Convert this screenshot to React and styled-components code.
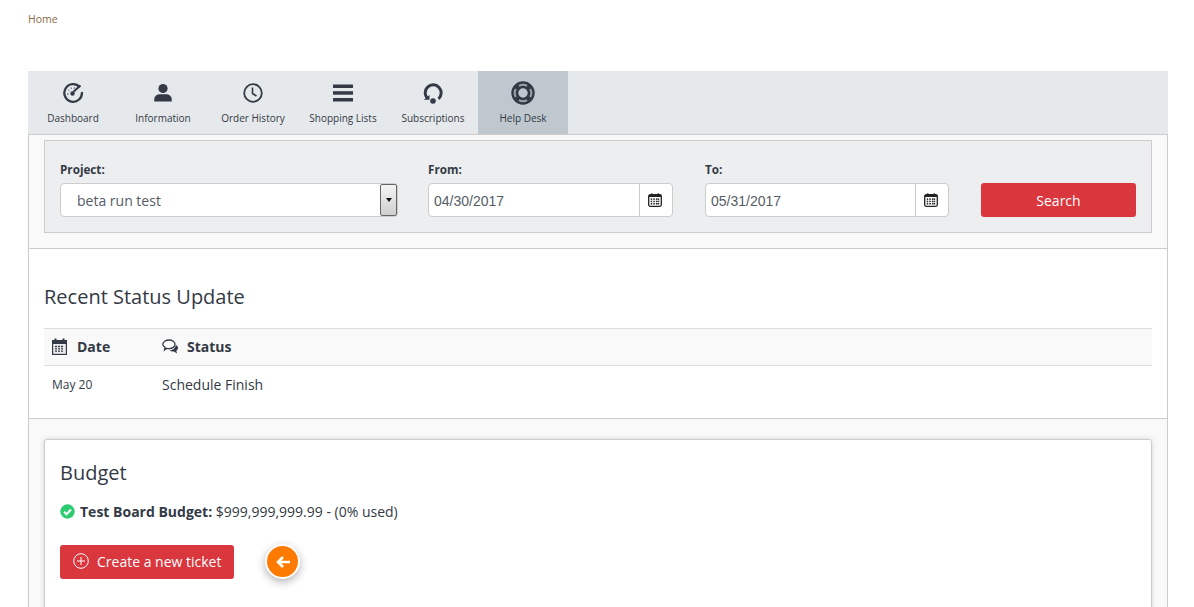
import React from "react";
import styled, { createGlobalStyle } from "styled-components";

const Global = createGlobalStyle`
  html, body { margin: 0; padding: 0; background: #fff; overflow: hidden; }
  body { font-family: "Open Sans", sans-serif; color: #333a45; height: 607px; }
  * { box-sizing: border-box; }
`;

const Page = styled.div`
  padding: 0 26px 0 28px;
  height: 607px;
  overflow: hidden;
`;
const Crumb = styled.div`
  height: 71px;
  padding-top: 12px;
  font-size: 10.5px;
  line-height: 14px;
  color: #8a6a4a;
`;
const Tabs = styled.nav`
  display: flex;
  height: 64px;
  background: #e6e9ec;
  border-bottom: 1px solid #ccc;
`;
const Tab = styled.div`
  width: 90px;
  height: 63px;
  display: flex;
  flex-direction: column;
  align-items: center;
  background: ${p => (p.$active ? "#c0c8cf" : "transparent")};
  font-size: 10px;
  color: #333a45;
`;
const TabIcon = styled.div`
  height: 40px;
  display: flex;
  align-items: center;
  justify-content: center;
  padding-top: 3px;
  flex: none;
`;
const TabLabel = styled.span`
  line-height: 14px;
  white-space: nowrap;
`;
const Panel = styled.div`
  border-left: 1px solid #ccc;
  border-right: 1px solid #ccc;
`;
const FilterSection = styled.section`
  background: #f9f9f9;
  padding: 5px 15px 15px;
  border-bottom: 1px solid #ccc;
`;
const FilterBox = styled.div`
  height: 93px;
  background: #eceef0;
  border: 1px solid #ccc;
  padding: 21px 15px 0;
  display: flex;
  align-items: flex-start;
`;
const Field = styled.div`
  width: ${p => p.$w}px;
  margin-right: ${p => p.$mr}px;
`;
const Label = styled.div`
  font-size: 11.7px;
  font-weight: 700;
  line-height: 15px;
  height: 21px;
  color: #333a45;
`;
const SelectBox = styled.div`
  height: 34px;
  background: #fff;
  border: 1px solid #ccc;
  border-radius: 4px;
  display: flex;
  align-items: center;
  justify-content: space-between;
  padding-left: 16px;
  font-size: 14px;
  color: #555c66;
`;
const SelectArrow = styled.div`
  width: 17px;
  height: 32px;
  background: linear-gradient(#f4f4f4, #cfcfcf);
  border: 1px solid #666;
  border-radius: 2px;
  display: flex;
  align-items: center;
  justify-content: center;
  &::before {
    content: "";
    border-left: 3.5px solid transparent;
    border-right: 3.5px solid transparent;
    border-top: 4px solid #111;
  }
`;
const DateGroup = styled.div`
  height: 34px;
  display: flex;
  background: #fff;
  border: 1px solid #ccc;
  border-radius: 4px;
`;
const DateText = styled.div`
  flex: 1;
  font-family: "Liberation Sans", Arial, sans-serif;
  font-size: 14px;
  line-height: 34px;
  padding-left: 5px;
  color: #555c66;
`;
const DateAddon = styled.div`
  width: 33px;
  border-left: 1px solid #ccc;
  display: flex;
  align-items: center;
  justify-content: center;
  padding-right: 2px;
`;
const SearchButton = styled.button`
  width: 155px;
  height: 34px;
  margin-top: 21px;
  background: #d9363e;
  color: #fff;
  border: 0;
  border-radius: 3px;
  font-family: inherit;
  font-size: 14px;
`;
const StatusSection = styled.section`
  background: #fff;
  height: 170px;
  padding: 0 15px;
  border-bottom: 1px solid #ccc;
`;
const Heading = styled.h2`
  margin: 0;
  font-size: 20px;
  font-weight: 400;
  line-height: 28px;
  color: #333a45;
`;
const StatusHeading = styled(Heading)`
  padding-top: 34px;
  height: 79px;
`;
const TableHead = styled.div`
  height: 38px;
  display: flex;
  align-items: center;
  background: #f9f9f9;
  border-top: 1px solid #ddd;
  border-bottom: 1px solid #ddd;
  padding-bottom: 2px;
`;
const Row = styled.div`
  height: 38px;
  display: flex;
  align-items: center;
  padding-bottom: 2px;
`;
const DateCol = styled.div`
  width: 118px;
  padding-left: 8px;
  display: flex;
  align-items: center;
  gap: 10px;
  font-size: 12px;
`;
const StatusCol = styled.div`
  display: flex;
  align-items: center;
  gap: 9px;
  font-size: 14px;
`;
const ColTitle = styled.span`
  font-size: 14px;
  font-weight: 700;
`;
const BudgetSection = styled.section`
  background: #f9f9f9;
  padding: 20px 15px 0;
  height: 200px;
`;
const Card = styled.div`
  position: relative;
  height: 200px;
  background: #fff;
  border: 1px solid #ccc;
  border-radius: 3px;
  box-shadow: 0 0 5px rgba(0, 0, 0, 0.15);
  padding: 19px 15px;
`;
const BudgetLine = styled.div`
  margin-top: 14px;
  height: 20px;
  display: flex;
  align-items: center;
  gap: 5px;
  font-size: 14px;
  white-space: pre;
`;
const Strong = styled.strong`
  font-weight: 700;
`;
const TicketButton = styled.button`
  margin-top: 24px;
  width: 174px;
  height: 34px;
  display: flex;
  align-items: center;
  gap: 8px;
  padding: 0 0 2px 13px;
  background: #d9363e;
  color: #fff;
  border: 0;
  border-radius: 3px;
  font-family: inherit;
  font-size: 14px;
`;
const Fab = styled.div`
  position: absolute;
  left: 220px;
  top: 104px;
  width: 35px;
  height: 35px;
  border-radius: 50%;
  background: #ff7a00;
  border: 2px solid #fff;
  box-shadow: 0 3px 8px rgba(0, 0, 0, 0.3);
  display: flex;
  align-items: center;
  justify-content: center;
`;

const Cal = ({ size = 14 }) => (
  <svg width={size} height={size} viewBox="0 0 14 14">
    <rect x="0.7" y="1.7" width="12.6" height="11.6" rx="1.5" fill="none" stroke="#222" strokeWidth="1.3" />
    <rect x="1" y="2" width="12" height="2" fill="#222" />
    <rect x="3" y="0.4" width="1.4" height="2.2" fill="#222" />
    <rect x="9.6" y="0.4" width="1.4" height="2.2" fill="#222" />
    {[3, 5.6, 8.2, 10].map(x => [5.4, 7.7, 10].map(y => (
      <rect key={`${x}-${y}`} x={x - 0.3} y={y} width="1.5" height="1.5" fill="#222" />
    )))}
  </svg>
);

const icons = {
  dash: (
    <svg width="22" height="22" viewBox="0 0 22 22" fill="none" stroke="#333a45">
      <path d="M17.800 5.200A8.800 8.800 0 1 0 19.900 10" strokeWidth="2.300" />
      <path d="M18.500 3.500 11.500 9.800" strokeWidth="2" />
      <circle cx="10.500" cy="11.500" r="2.200" fill="#333a45" stroke="none" />
      <path d="M5 12h1.500M6.300 8l1 .8M9 5.600l.3 1.200M12.500 5.500l-.3 1.200" strokeWidth="1" />
    </svg>
  ),
  user: (
    <svg width="20" height="20" viewBox="0 0 20 20" fill="#333a45">
      <circle cx="10" cy="5.500" r="4.600" />
      <path d="M1.300 18.500v-2.300c0-3 2.900-4.900 5.500-4.900h6.400c2.600 0 5.500 1.900 5.500 4.900v2.300z" />
    </svg>
  ),
  clock: (
    <svg width="22" height="22" viewBox="0 0 22 22" fill="none" stroke="#333a45">
      <circle cx="11" cy="11" r="8.800" strokeWidth="1.800" />
      <path d="M10.500 5.500V11.500L14.500 14" strokeWidth="1.600" />
    </svg>
  ),
  bars: (
    <svg width="20" height="18" viewBox="0 0 20 18" fill="#333a45">
      <rect y="0.500" width="20" height="3.500" />
      <rect y="7.200" width="20" height="3.500" />
      <rect y="14" width="20" height="3.500" />
    </svg>
  ),
  sub: (
    <svg width="22" height="22" viewBox="0 0 22 22" fill="none" stroke="#333a45">
      <path d="M5.500 16.500A8 8 0 1 1 16.500 16.800" strokeWidth="3" />
      <path d="M1.800 17.800h5.700V13z" fill="#333a45" stroke="none" />
      <circle cx="11" cy="19" r="2.800" fill="#333a45" stroke="none" />
    </svg>
  ),
  help: (
    <svg width="24" height="24" viewBox="0 0 24 24" fill="none">
      <circle cx="12" cy="12" r="8.200" stroke="#333a45" strokeWidth="7" />
      <path d="M8 4.800A8.200 8.200 0 0 1 16 4.800M8 19.200A8.200 8.200 0 0 0 16 19.200M4.800 8A8.200 8.200 0 0 0 4.800 16M19.200 8A8.200 8.200 0 0 1 19.200 16" stroke="#9aa4ad" strokeWidth="2" />
    </svg>
  ),
};

const tabs = [
  ["Dashboard", icons.dash],
  ["Information", icons.user],
  ["Order History", icons.clock],
  ["Shopping Lists", icons.bars],
  ["Subscriptions", icons.sub],
  ["Help Desk", icons.help, true],
];

export default function App() {
  return (
    <Page>
      <Global />
      <Crumb>Home</Crumb>
      <Tabs>
        {tabs.map(([label, icon, active]) => (
          <Tab key={label} $active={active}>
            <TabIcon>{icon}</TabIcon>
            <TabLabel>{label}</TabLabel>
          </Tab>
        ))}
      </Tabs>
      <Panel>
        <FilterSection>
          <FilterBox>
            <Field $w={338} $mr={30}>
              <Label>Project:</Label>
              <SelectBox>
                beta run test
                <SelectArrow />
              </SelectBox>
            </Field>
            <Field $w={245} $mr={32}>
              <Label>From:</Label>
              <DateGroup>
                <DateText>04/30/2017</DateText>
                <DateAddon><Cal /></DateAddon>
              </DateGroup>
            </Field>
            <Field $w={244} $mr={32}>
              <Label>To:</Label>
              <DateGroup>
                <DateText>05/31/2017</DateText>
                <DateAddon><Cal /></DateAddon>
              </DateGroup>
            </Field>
            <SearchButton>Search</SearchButton>
          </FilterBox>
        </FilterSection>
        <StatusSection>
          <StatusHeading>Recent Status Update</StatusHeading>
          <TableHead>
            <DateCol>
              <svg width="15" height="17" viewBox="0 0 15 17">
                <rect x="0.600" y="2.600" width="13.800" height="13.800" fill="#ededed" stroke="#333a45" strokeWidth="1.200" />
                <rect x="1" y="3" width="13" height="3" fill="#333a45" />
                <rect x="2.500" y="0.500" width="2" height="3.500" fill="#333a45" />
                <rect x="10.500" y="0.500" width="2" height="3.500" fill="#333a45" />
                <path d="M3 8.500h9M3 10.800h9M3 13.100h9" stroke="#333a45" strokeWidth="1.300" strokeDasharray="2 1" />
              </svg>
              <ColTitle>Date</ColTitle>
            </DateCol>
            <StatusCol>
              <svg width="16" height="15" viewBox="0 0 16 15">
                <path d="M14 6c1.300.8 2 1.800 2 2.900 0 1.100-.7 2-1.700 2.700l.7 2.900-3-2c-2 .1-3.500-.4-4.500-1.300 3 .1 5.500-1.500 6.500-5.200z" fill="#333a45" />
                <path d="M7 1c3.200 0 6 1.800 6 4.300s-2.800 4.300-6 4.300c-.8 0-1.500-.1-2.100-.3L2.500 11l.6-2.800C1.800 7.500.8 6.500.8 5.300.8 2.800 3.800 1 7 1z" fill="#fff" stroke="#333a45" strokeWidth="1.300" />
              </svg>
              <ColTitle>Status</ColTitle>
            </StatusCol>
          </TableHead>
          <Row>
            <DateCol>May 20</DateCol>
            <StatusCol>Schedule Finish</StatusCol>
          </Row>
        </StatusSection>
        <BudgetSection>
          <Card>
            <Heading>Budget</Heading>
            <BudgetLine>
              <svg width="15" height="15" viewBox="0 0 15 15">
                <circle cx="7.500" cy="7.500" r="7.200" fill="#2ecc71" />
                <path d="M4 7.700l2.500 2.500L11 5.500" fill="none" stroke="#fff" strokeWidth="2" />
              </svg>
              <span><Strong>Test Board Budget:</Strong> $999,999,999.99 - (0% used)</span>
            </BudgetLine>
            <TicketButton>
              <svg width="16" height="16" viewBox="0 0 16 16" fill="none" stroke="#fff" strokeWidth="1">
                <circle cx="8" cy="8" r="7.300" />
                <path d="M8 4v8M4 8h8" />
              </svg>
              Create a new ticket
            </TicketButton>
            <Fab>
              <svg width="14" height="14" viewBox="0 0 14 14" fill="none" stroke="#fff" strokeWidth="2.600">
                <path d="M7 2 2 7l5 5M2.500 7H14" />
              </svg>
            </Fab>
          </Card>
        </BudgetSection>
      </Panel>
    </Page>
  );
}
